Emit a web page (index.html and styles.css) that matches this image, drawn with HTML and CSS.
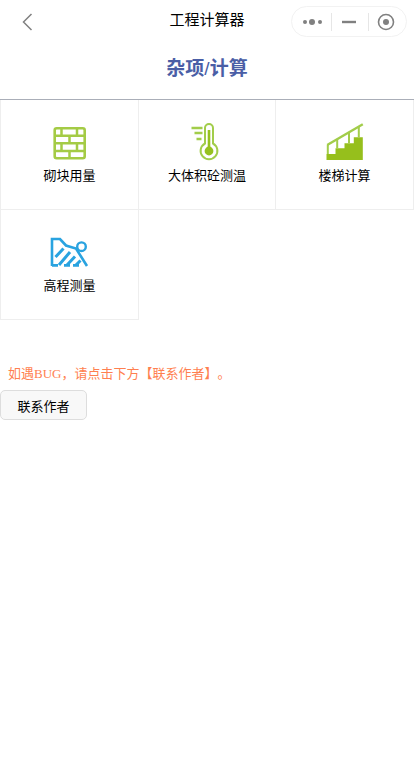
FILE: index.html
```html
<!DOCTYPE html>
<html lang="zh-CN">
<head>
    <meta charset="UTF-8">
    <meta name="viewport" content="width=device-width, initial-scale=1.0">
    <title>工程计算器</title>
    <link rel="stylesheet" href="styles.css">
</head>
<body>
    <!-- Top bar with back arrow and capsule -->
    <header class="navBar">
        <svg class="backIcon" width="11" height="18" viewBox="0 0 11 18">
            <path d="M9.5 1 L1.5 9 L9.5 17" fill="none" stroke="#808080" stroke-width="1.5"/>
        </svg>
        <div class="navTitle">工程计算器</div>
        <div class="capsule">
            <svg width="116" height="31" viewBox="0 0 116 31">
                <circle cx="14" cy="16" r="2" fill="#808080"/>
                <circle cx="21" cy="16" r="3" fill="#808080"/>
                <circle cx="29" cy="16" r="2" fill="#808080"/>
                <path d="M40.5 7 V25 M77.5 7 V25" stroke="#e6e6e6" stroke-width="1"/>
                <path d="M51 16 H65" stroke="#808080" stroke-width="2.4"/>
                <circle cx="95" cy="16" r="7.5" fill="none" stroke="#808080" stroke-width="1.6"/>
                <circle cx="95" cy="16" r="3" fill="#808080"/>
            </svg>
        </div>
    </header>

    <h1 class="pageTitle">杂项<span class="titleSlash">/</span>计算</h1>

    <!-- Calculator menu -->
    <div class="menuGrid">
        <div class="menuItem">
            <svg width="40" height="40" viewBox="0 0 40 40">
                <rect x="4.7" y="5.2" width="30" height="30" rx="2" fill="none" stroke="#a4cb45" stroke-width="2.6"/>
                <path d="M5 12.7 H35 M5 20.3 H35 M5 28 H35 M11.5 5 V12.7 M27 5 V12.7 M19.5 12.7 V20.3 M11.5 20.3 V28 M27 20.3 V28 M19.5 28 V35" fill="none" stroke="#a4cb45" stroke-width="2.5"/>
            </svg>
            <span class="menuLabel">砌块用量</span>
        </div>
        <div class="menuItem">
            <svg width="40" height="40" viewBox="0 0 40 40">
                <path d="M18 20.5 V5 A4 4 0 0 1 26 5 V20.5 A8.4 8.4 0 1 1 18 20.5 Z" fill="none" stroke="#a2cd4a" stroke-width="2"/>
                <path d="M22 7 V26" stroke="#96c11f" stroke-width="2.6"/>
                <circle cx="22" cy="28" r="4.4" fill="#96c11f"/>
                <path d="M4.5 5 H15.5 M7.5 10 H15.5 M9.5 16 H14.5" stroke="#a2cd4a" stroke-width="2.6"/>
            </svg>
            <span class="menuLabel">大体积砼测温</span>
        </div>
        <div class="menuItem">
            <svg width="40" height="40" viewBox="0 0 40 40">
                <path d="M1.5 37 V31 H10.5 V25.3 H19.5 V20.3 H28.8 V14.3 H37.8 V37 Z" fill="#96bf1c"/>
                <path d="M2.2 22 L37.8 1.3" stroke="#a2cd4a" stroke-width="2.4" fill="none"/>
                <path d="M2.8 22 V31 M12.2 16 V25.3 M24 9 V20.3 M33.8 4 V14.3" stroke="#a2cd4a" stroke-width="2" fill="none"/>
            </svg>
            <span class="menuLabel">楼梯计算</span>
        </div>
        <div class="menuItem">
            <svg width="40" height="40" viewBox="0 0 40 40">
                <path d="M2 33 V6 H10 L16 12.5 L26 15.5 L37 33" fill="none" stroke="#29a3e0" stroke-width="2.6"/>
                <path d="M2 32.4 H8 M14 32.4 H20 M23 32.4 H29" stroke="#29a3e0" stroke-width="2.6" fill="none"/>
                <path d="M5.5 24 L13.5 15.5 M9 32 L20 19 M17 32 L25 23.5 M26 32 L30.5 27.5" stroke="#29a3e0" stroke-width="3" fill="none"/>
                <circle cx="31.5" cy="13.7" r="4.3" fill="none" stroke="#29a3e0" stroke-width="2.4"/>
            </svg>
            <span class="menuLabel">高程测量</span>
        </div>
    </div>

    <p class="bugNote">如遇BUG，请点击下方【联系作者】。</p>
    <button class="contactButton">联系作者</button>
</body>
</html>
```

FILE: styles.css
```css
body {
    margin: 0;
    background-color: #ffffff;
    font-family: "Liberation Serif", "Noto Sans CJK SC", serif;
    color: #000000;
    text-spacing-trim: space-all;
}

/* Top bar */
.navBar {
    display: grid;
    grid-template-columns: 1fr auto 1fr;
    align-items: center;
    height: 44px;
    padding: 0 7px 0 22px;
    box-sizing: border-box;
}

.backIcon {
    display: block;
}

.navTitle {
    font-size: 15px;
    line-height: 20px;
    margin: -4px 0 0 -15px;
    font-family: "Liberation Sans", "Noto Sans CJK SC", sans-serif;
}

.capsule {
    justify-self: end;
    width: 116px;
    height: 31px;
    border: 1px solid #f2f2f2;
    border-radius: 16px;
    box-sizing: border-box;
    margin-top: -1px;
}

.capsule svg {
    display: block;
    margin: -1px;
}

.pageTitle {
    margin: 0;
    height: 55px;
    line-height: 49px;
    text-align: center;
    font-size: 19px;
    font-weight: bold;
    color: #4a5ea6;
    font-family: "Liberation Sans", "Noto Sans CJK SC", sans-serif;
}

.titleSlash {
    font-weight: normal;
}

/* Menu grid, 3 cells in a row */
.menuGrid {
    display: grid;
    grid-template-columns: 139px 137px 138px;
    grid-auto-rows: 110px;
    width: 414px;
    border-top: 1px solid #aaaeb8;
}

.menuItem {
    display: flex;
    flex-direction: column;
    align-items: center;
    padding-top: 23px;
    box-sizing: border-box;
    border-right: 1px solid #eeeeee;
    border-bottom: 1px solid #eeeeee;
}

.menuItem:nth-child(3n+1) {
    border-left: 1px solid #eeeeee;
}

.menuLabel {
    margin-top: 3px;
    font-size: 13px;
    line-height: 20px;
    font-family: "Liberation Sans", "Noto Sans CJK SC", sans-serif;
}

.bugNote {
    margin: 44px 0 7px 8px;
    font-size: 13px;
    line-height: 19px;
    color: #ff7f50;
}

.contactButton {
    display: block;
    width: 87px;
    height: 30px;
    padding: 0;
    font-size: 13px;
    font-family: "Liberation Sans", "Noto Sans CJK SC", sans-serif;
    color: #000000;
    background-color: #f8f8f8;
    border: 1px solid #dddddd;
    border-radius: 5px;
}
```
